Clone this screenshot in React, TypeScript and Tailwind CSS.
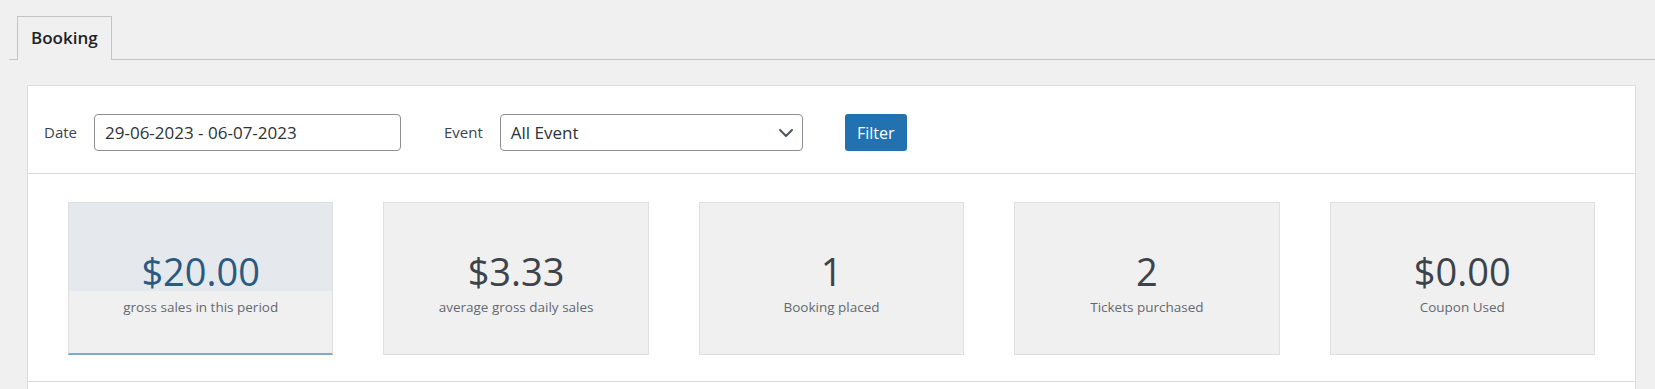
const stats = [
  { value: '$20.00', label: 'gross sales in this period', active: true },
  { value: '$3.33', label: 'average gross daily sales' },
  { value: '1', label: 'Booking placed' },
  { value: '2', label: 'Tickets purchased' },
  { value: '$0.00', label: 'Coupon Used' },
];

const StatCard = ({ value, label, active }: { value: string; label: string; active?: boolean }) => {
  return (
    <div
      className={
        active
          ? 'flex flex-col h-[153px] border border-[#dfdfdf] border-b-2 border-b-[#7ea8cc] bg-[#f0f0f0]'
          : 'flex flex-col h-[153px] border border-[#dfdfdf] bg-[#f0f0f0]'
      }
    >
      <div
        className={
          active
            ? 'flex items-end justify-center h-[88px] bg-[#e5e9ee] pb-[1px]'
            : 'flex items-end justify-center h-[88px] pb-[1px]'
        }
      >
        <span
          className={
            active
              ? 'text-[38px] font-normal leading-none text-[#2a5a82]'
              : 'text-[38px] font-normal leading-none text-[#3c434a]'
          }
        >
          {value}
        </span>
      </div>
      <p className="mt-[6px] text-center text-[13.5px] leading-[20px] text-[#646970]">{label}</p>
    </div>
  );
};

export default function App() {
  return (
    <div
      className="min-h-[389px] bg-[#f0f0f0] text-[#3c434a]"
      style={{ fontFamily: '"Open Sans", "Noto Sans", sans-serif' }}
    >
      <div className="pt-[16px] ml-[9px]">
        <div className="flex border-b border-[#c3c4c7] pl-[8px]">
          <div className="-mb-px h-[44px] px-[13px] border border-b-0 border-[#c3c4c7] bg-[#f0f0f0] text-[17px] font-semibold leading-[42px] text-[#1d2327]">
            Booking
          </div>
        </div>
      </div>

      <div className="mt-[25px] ml-[27px] mr-[19px] border border-[#dcdcde] bg-white pb-[7px]">
        <div className="flex items-center pt-[28px] pb-[22px] pl-[16px] border-b border-[#dcdcde]">
          <label className="text-[15px] text-[#3c434a]">Date</label>
          <div className="ml-[17px] flex items-center w-[307px] h-[37px] px-[10px] border border-[#8c8f94] rounded-[4px] text-[17px] text-[#2c3338]">
            29-06-2023 - 06-07-2023
          </div>
          <label className="ml-[43px] text-[15px] text-[#3c434a]">Event</label>
          <div className="ml-[17px] flex items-center justify-between w-[303px] h-[37px] pl-[10px] pr-[9px] border border-[#8c8f94] rounded-[4px] text-[17px] text-[#2c3338]">
            <span>All Event</span>
            <svg width="14" height="8" viewBox="0 0 14 8" fill="none">
              <polyline points="1,1 7,7 13,1" stroke="#50575e" strokeWidth="2" strokeLinecap="round" strokeLinejoin="round" />
            </svg>
          </div>
          <button className="ml-[42px] h-[37px] w-[62px] rounded-[3px] bg-[#2271b1] text-[16px] text-white">
            Filter
          </button>
        </div>

        <div className="grid grid-cols-5 gap-[50px] px-[40px] pt-[28px] pb-[26px] border-b border-[#dcdcde]">
          {stats.map((s) => (
            <StatCard key={s.label} value={s.value} label={s.label} active={s.active} />
          ))}
        </div>
      </div>
    </div>
  );
}
